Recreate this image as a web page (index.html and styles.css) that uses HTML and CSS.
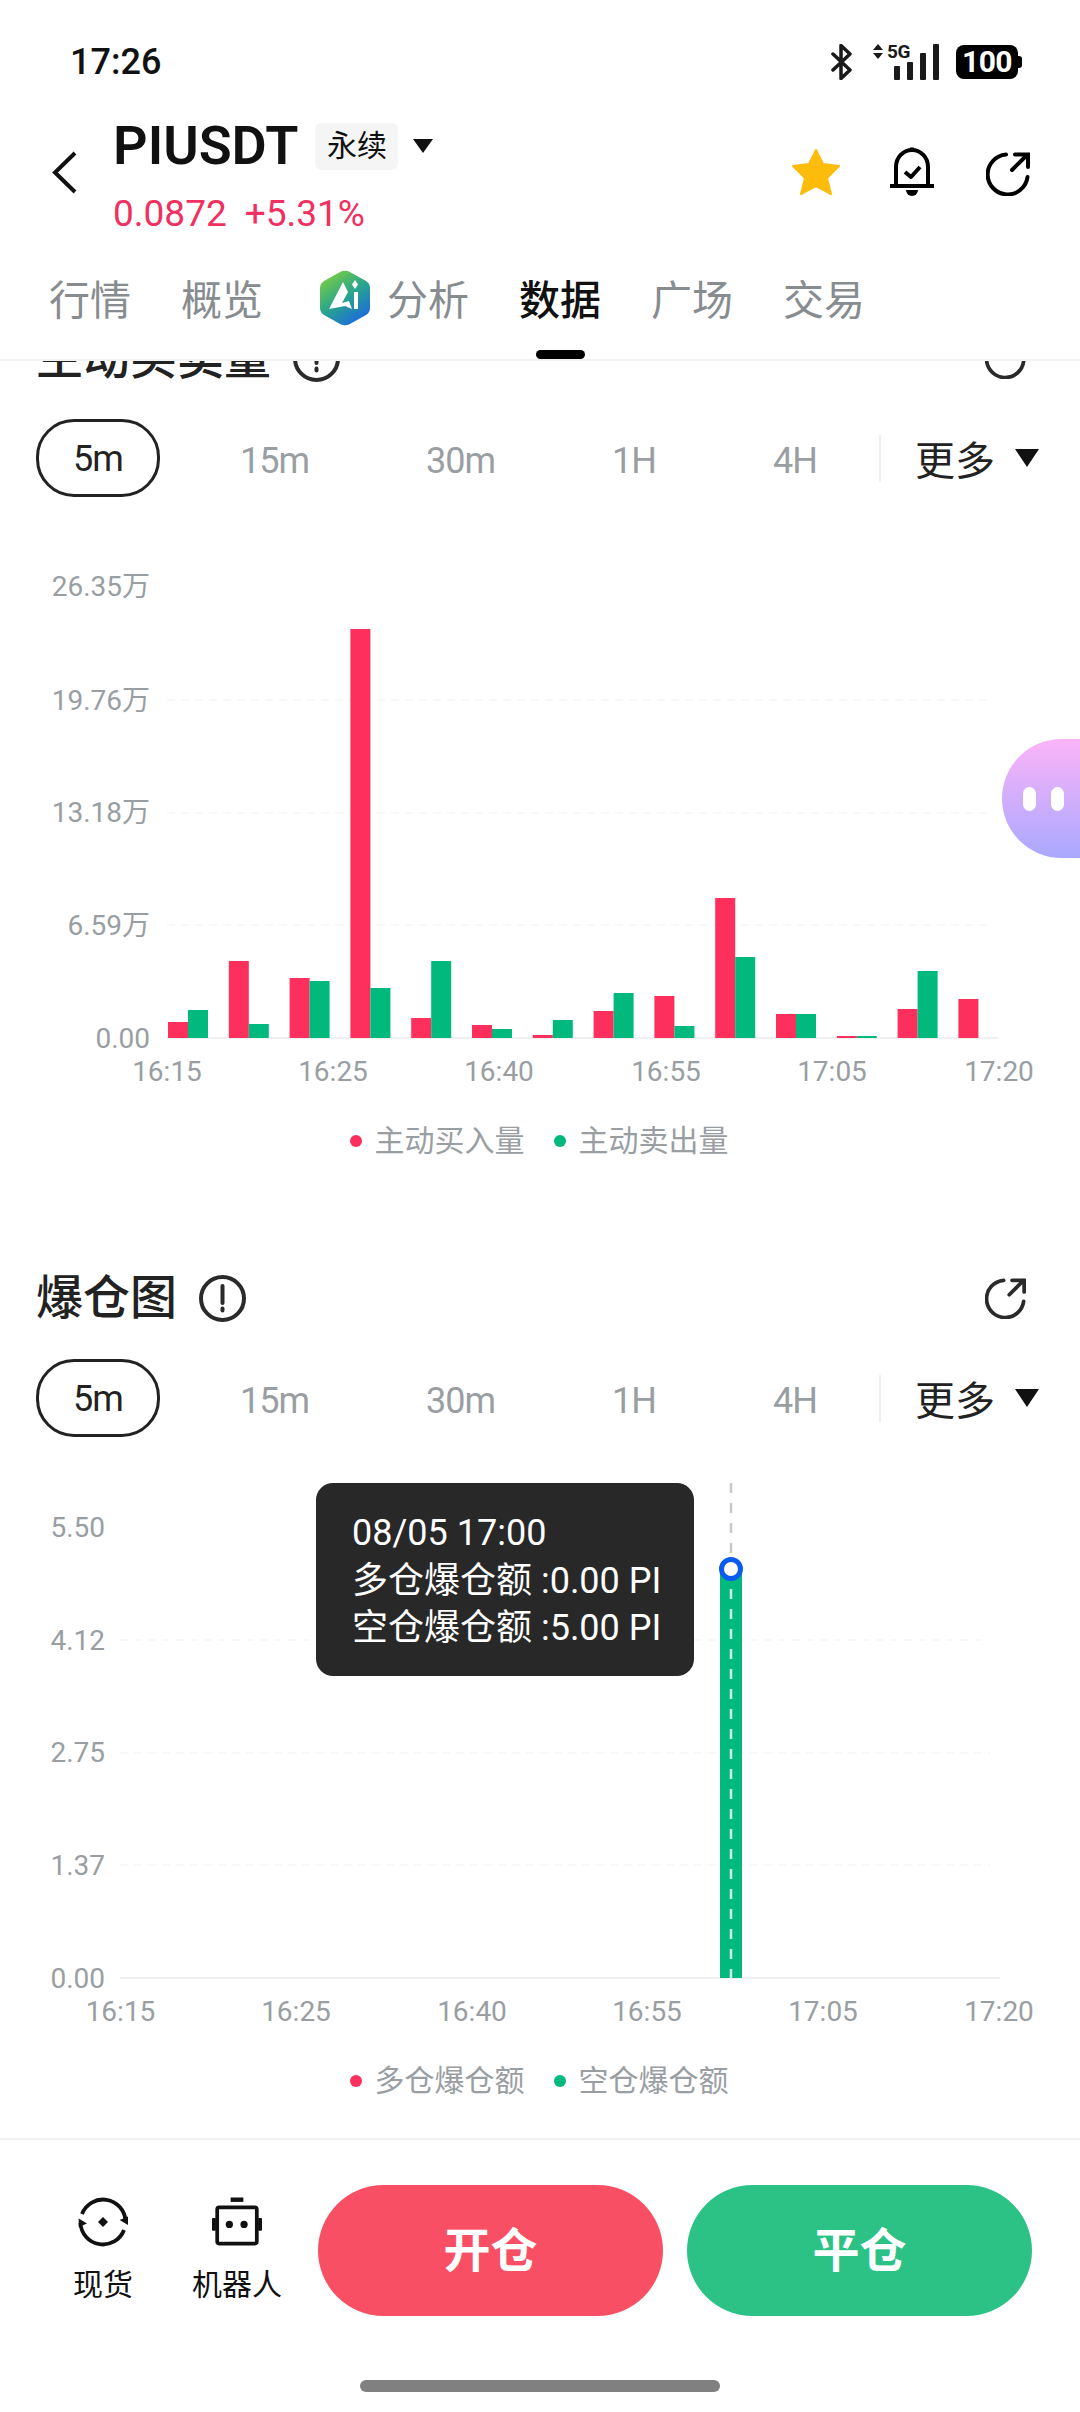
FILE: index.html
```html
<!doctype html>
<html lang="zh">
<head>
    <meta charset="utf-8">
    <title>PIUSDT 数据</title>
    <link rel="stylesheet" href="styles.css">
</head>
<body>
    <div class="page">
        <header class="top">
            <div class="status-bar">
                <span class="clock">17:26</span>
                <div class="status-icons">
                    <svg class="ic-bt" viewBox="0 0 21 36"><path d="M2 10 L19 26 L10 34.5 V1.5 L19 10 L2 26"/></svg>
                    <svg class="ic-signal" viewBox="0 0 67 36">
                        <polygon points="0,6 5,0 10,6"/>
                        <polygon points="0,9 10,9 5,15"/>
                        <text x="14" y="14" class="five-g">5G</text>
                        <rect x="21" y="22" width="6" height="14" rx="1"/>
                        <rect x="34" y="18" width="6" height="18" rx="1"/>
                        <rect x="47" y="9" width="6" height="27" rx="1"/>
                        <rect x="60" y="0" width="6" height="36" rx="1"/>
                    </svg>
                    <div class="battery">100</div>
                </div>
            </div>

            <div class="head-row">
                <svg class="ic-back" viewBox="0 0 25 43"><path d="M23 2 L3 21.5 L23 41"/></svg>
                <div class="pair">
                    <div class="pair-name">
                        <h1>PIUSDT</h1>
                        <span class="tag">永续</span>
                        <span class="tri tri-tag"></span>
                    </div>
                    <div class="pair-price">
                        <span>0.0872</span>
                        <span>+5.31%</span>
                    </div>
                </div>
                <div class="head-actions">
                    <svg class="ic-star" viewBox="0 0 50 48"><polygon points="25,2 32,16 48,18 36,30 40,46 25,38 10,46 14,30 2,18 18,16"/></svg>
                    <svg class="ic-bell" viewBox="0 0 44 50">
                        <path class="line" d="M6 39 V20 A16 17 0 0 1 38 20 V39"/>
                        <path class="line" d="M0 39 H44"/>
                        <path class="line" d="M22 0.5 V3"/>
                        <path class="line" d="M15 25 L21 30 L30 20"/>
                        <path class="solid" d="M16 43 H28 A6 6 0 0 1 16 43 Z"/>
                    </svg>
                    <svg class="ic-share" viewBox="0 0 44 44">
                        <path d="M20 2.5 A20 20 0 1 0 41.5 25"/>
                        <path d="M26 18 L41 3"/>
                        <path d="M29 2.5 H42 V15"/>
                    </svg>
                </div>
            </div>

            <nav class="tabs">
                <div class="tab">行情</div>
                <div class="tab">概览</div>
                <div class="tab tab-ai">
                    <svg class="ic-ai" viewBox="0 0 52 56">
                        <defs>
                            <linearGradient id="aiGrad" x1="0.15" y1="0" x2="0.8" y2="1">
                                <stop offset="0" stop-color="#7fd13c"/>
                                <stop offset="0.5" stop-color="#2aa58c"/>
                                <stop offset="1" stop-color="#1a64e6"/>
                            </linearGradient>
                        </defs>
                        <path fill="url(#aiGrad)" d="M22 1.5 Q26 0 30 1.5 L47 11 Q51 13.500 51 18 V38 Q51 42.500 47 45 L30 54.500 Q26 56 22 54.500 L5 45 Q1 42.500 1 38 V18 Q1 13.500 5 11 Z"/>
                        <path fill="#fff" d="M10 39 L24 12 L29 22 L23 33 L30 31 L33 39 L26 36 Z"/>
                        <path fill="#fff" d="M35 22 H39 V39 H35 Z"/>
                        <path fill="#fff" d="M36 10 L39 14.500 L36 19 L33 14.500 Z"/>
                    </svg>
                    <span>分析</span>
                </div>
                <div class="tab tab-active">数据</div>
                <div class="tab">广场</div>
                <div class="tab">交易</div>
            </nav>
        </header>

        <main class="scroll">
            <section class="section section-first">
                <div class="section-head">
                    <h2>主动买卖量</h2>
                    <svg class="ic-info" viewBox="0 0 47 47">
                        <circle cx="23.5" cy="23.500" r="21.500"/>
                        <path d="M23.500 11 V28"/>
                        <path d="M23.500 33.500 V35.500"/>
                    </svg>
                    <svg class="ic-share ic-share-sm" viewBox="0 0 44 44">
                        <path d="M20 2.5 A20 20 0 1 0 41.5 25"/>
                        <path d="M26 18 L41 3"/>
                        <path d="M29 2.5 H42 V15"/>
                    </svg>
                </div>
                <div class="periods">
                    <span class="period period-on">5m</span>
                    <span class="period">15m</span>
                    <span class="period">30m</span>
                    <span class="period">1H</span>
                    <span class="period">4H</span>
                    <div class="more"><span>更多</span><span class="tri tri-more"></span></div>
                </div>
                <div class="chart">
                    <svg class="plot" viewBox="0 0 1080 590">
                        <g class="grid">
                            <line x1="167" y1="190" x2="992" y2="190"/>
                            <line x1="167" y1="303" x2="992" y2="303"/>
                            <line x1="167" y1="415" x2="992" y2="415"/>
                        </g>
                        <line class="base" x1="167" y1="528" x2="998" y2="528"/>
                        <g class="bars-buy">
                            <rect x="168" y="512" width="20" height="16"/>
                            <rect x="228.8" y="451" width="20" height="77"/>
                            <rect x="289.6" y="468" width="20" height="60"/>
                            <rect x="350.4" y="119" width="20" height="409"/>
                            <rect x="411.2" y="508" width="20" height="20"/>
                            <rect x="472" y="515" width="20" height="13"/>
                            <rect x="532.8" y="525" width="20" height="3"/>
                            <rect x="593.6" y="501" width="20" height="27"/>
                            <rect x="654.4" y="486" width="20" height="42"/>
                            <rect x="715.2" y="388" width="20" height="140"/>
                            <rect x="776" y="504" width="20" height="24"/>
                            <rect x="836.8" y="526" width="20" height="2"/>
                            <rect x="897.6" y="499" width="20" height="29"/>
                            <rect x="958.4" y="489" width="20" height="39"/>
                        </g>
                        <g class="bars-sell">
                            <rect x="188" y="500" width="20" height="28"/>
                            <rect x="248.8" y="514" width="20" height="14"/>
                            <rect x="309.6" y="471" width="20" height="57"/>
                            <rect x="370.4" y="478" width="20" height="50"/>
                            <rect x="431.2" y="451" width="20" height="77"/>
                            <rect x="492" y="519" width="20" height="9"/>
                            <rect x="552.8" y="510" width="20" height="18"/>
                            <rect x="613.6" y="483" width="20" height="45"/>
                            <rect x="674.4" y="516" width="20" height="12"/>
                            <rect x="735.2" y="447" width="20" height="81"/>
                            <rect x="796" y="504" width="20" height="24"/>
                            <rect x="856.8" y="526" width="20" height="2"/>
                            <rect x="917.6" y="461" width="20" height="67"/>
                        </g>
                        <g class="y-labels">
                            <text x="150" y="86">26.35万</text>
                            <text x="150" y="200">19.76万</text>
                            <text x="150" y="312">13.18万</text>
                            <text x="150" y="425">6.59万</text>
                            <text x="150" y="538">0.00</text>
                        </g>
                        <g class="x-labels">
                            <text x="167" y="571">16:15</text>
                            <text x="333" y="571">16:25</text>
                            <text x="499" y="571">16:40</text>
                            <text x="666" y="571">16:55</text>
                            <text x="832" y="571">17:05</text>
                            <text x="999" y="571">17:20</text>
                        </g>
                    </svg>
                </div>
                <div class="legend">
                    <div class="legend-item"><i class="dot dot-red"></i>主动买入量</div>
                    <div class="legend-item"><i class="dot dot-green"></i>主动卖出量</div>
                </div>
            </section>

            <section class="section">
                <div class="section-head">
                    <h2>爆仓图</h2>
                    <svg class="ic-info" viewBox="0 0 47 47">
                        <circle cx="23.5" cy="23.500" r="21.500"/>
                        <path d="M23.500 11 V28"/>
                        <path d="M23.500 33.500 V35.500"/>
                    </svg>
                    <svg class="ic-share ic-share-sm" viewBox="0 0 44 44">
                        <path d="M20 2.5 A20 20 0 1 0 41.5 25"/>
                        <path d="M26 18 L41 3"/>
                        <path d="M29 2.5 H42 V15"/>
                    </svg>
                </div>
                <div class="periods">
                    <span class="period period-on">5m</span>
                    <span class="period">15m</span>
                    <span class="period">30m</span>
                    <span class="period">1H</span>
                    <span class="period">4H</span>
                    <div class="more"><span>更多</span><span class="tri tri-more"></span></div>
                </div>
                <div class="chart">
                    <svg class="plot" viewBox="0 0 1080 590">
                        <g class="grid">
                            <line x1="120" y1="190" x2="990" y2="190"/>
                            <line x1="120" y1="303" x2="990" y2="303"/>
                            <line x1="120" y1="415" x2="990" y2="415"/>
                        </g>
                        <line class="base" x1="120" y1="528" x2="1000" y2="528"/>
                        <rect class="liq-bar" x="720" y="119" width="22" height="409"/>
                        <line class="cursor-top" x1="731" y1="33" x2="731" y2="119"/>
                        <line class="cursor-low" x1="731" y1="119" x2="731" y2="528"/>
                        <circle class="marker" cx="731" cy="119" r="9.500"/>
                        <g class="y-labels">
                            <text x="105" y="87">5.50</text>
                            <text x="105" y="200">4.12</text>
                            <text x="105" y="312">2.75</text>
                            <text x="105" y="425">1.37</text>
                            <text x="105" y="538">0.00</text>
                        </g>
                        <g class="x-labels">
                            <text x="120.500" y="571">16:15</text>
                            <text x="296" y="571">16:25</text>
                            <text x="472" y="571">16:40</text>
                            <text x="647" y="571">16:55</text>
                            <text x="823" y="571">17:05</text>
                            <text x="999" y="571">17:20</text>
                        </g>
                    </svg>
                    <div class="tooltip">
                        <div>08/05 17:00</div>
                        <div>多仓爆仓额 :0.00 PI</div>
                        <div>空仓爆仓额 :5.00 PI</div>
                    </div>
                </div>
                <div class="legend">
                    <div class="legend-item"><i class="dot dot-red"></i>多仓爆仓额</div>
                    <div class="legend-item"><i class="dot dot-green"></i>空仓爆仓额</div>
                </div>
            </section>
        </main>

        <footer class="bottom">
            <div class="actions">
                <div class="tool">
                    <svg class="tool-icon" viewBox="0 0 50 50">
                        <path class="line" d="M4 17 A22.500 22.500 0 0 1 47.500 24"/>
                        <path class="line" d="M2.500 26 A22.500 22.500 0 0 0 46 33"/>
                        <polygon points="41.700,23 50,19.500 50,28"/>
                        <polygon points="0.700,21.500 9,26.500 0.700,30"/>
                        <polygon points="25,20 30,25 25,30 20,25"/>
                    </svg>
                    <span>现货</span>
                </div>
                <div class="tool">
                    <svg class="tool-icon" viewBox="0 0 51 50">
                        <rect x="19" y="0" width="13" height="4.500"/>
                        <rect class="line" x="5.300" y="10" width="40.400" height="37" rx="2"/>
                        <rect x="0" y="21" width="4" height="13" rx="1"/>
                        <rect x="47" y="21" width="4" height="13" rx="1"/>
                        <circle cx="17.700" cy="27.500" r="3.700"/>
                        <circle cx="32.700" cy="27.500" r="3.700"/>
                    </svg>
                    <span>机器人</span>
                </div>
                <button class="btn btn-open">开仓</button>
                <button class="btn btn-close">平仓</button>
            </div>
            <div class="home-bar"></div>
        </footer>

        <div class="float-bot">
            <span></span>
            <span></span>
        </div>
    </div>
</body>
</html>
```

FILE: styles.css
```css
* {
    box-sizing: border-box;
}
body {
    margin: 0;
    background-color: #fff;
    font-family: Roboto, "Noto Sans CJK SC", sans-serif;
    color: #111;
}
.page {
    position: relative;
    display: flex;
    flex-direction: column;
    width: 1080px;
    height: 2412px;
    overflow: hidden;
}

/* top area */
.top {
    position: relative;
    z-index: 1;
    height: 361px;
    flex: none;
    background-color: #fff;
    border-bottom: 2px solid #f3f3f3;
}
.status-bar {
    display: flex;
    justify-content: space-between;
    align-items: center;
    height: 123px;
    padding: 0 62px 0 70px;
}
.clock {
    font-size: 36px;
    font-weight: 500;
}
.status-icons {
    display: flex;
    align-items: center;
}
.ic-bt {
    width: 21px;
    height: 36px;
    margin-right: 21px;
    fill: none;
    stroke: #1a1a1a;
    stroke-width: 3.5;
    stroke-linejoin: round;
    stroke-linecap: round;
}
.ic-signal {
    width: 67px;
    height: 36px;
    margin-right: 16px;
    fill: #1a1a1a;
    overflow: visible;
}
.five-g {
    font-size: 19px;
    font-weight: 700;
    letter-spacing: -0.5px;
}
.battery {
    position: relative;
    width: 62px;
    height: 34px;
    border-radius: 8px;
    background-color: #000;
    color: #fff;
    font-size: 30px;
    font-weight: 700;
    letter-spacing: -0.5px;
    line-height: 34px;
    text-align: center;
}
.battery::after {
    content: "";
    position: absolute;
    right: -4px;
    top: 11px;
    width: 4px;
    height: 12px;
    border-radius: 0 3px 3px 0;
    background-color: #000;
}

.head-row {
    display: flex;
    height: 111px;
    padding-left: 52px;
}
.ic-back {
    width: 25px;
    height: 43px;
    margin-top: 28px;
    margin-right: 36px;
    fill: none;
    stroke: #111;
    stroke-width: 4;
}
.pair-name {
    display: flex;
    align-items: center;
    height: 46px;
}
h1 {
    margin: 0;
    font-size: 54px;
    font-weight: 600;
    line-height: 46px;
}
.tag {
    width: 83px;
    height: 47px;
    margin-left: 17px;
    border-radius: 6px;
    background-color: #f5f5f5;
    font-size: 30px;
    line-height: 46px;
    text-align: center;
}
.tri {
    display: block;
    width: 0;
    height: 0;
    border-left: 10px solid transparent;
    border-right: 10px solid transparent;
    border-top: 14px solid #111;
}
.tri-tag {
    margin-left: 15px;
}
.pair-price {
    display: flex;
    gap: 18px;
    margin-top: 25px;
    color: #ef3060;
    font-size: 37px;
    line-height: 40px;
}
.head-actions {
    display: flex;
    align-items: flex-start;
    margin-left: auto;
    padding-right: 50px;
}
.ic-star {
    width: 50px;
    height: 48px;
    margin-top: 25px;
    fill: #fdbb0c;
    stroke: #fdbb0c;
    stroke-width: 2;
    stroke-linejoin: round;
}
.ic-bell {
    width: 44px;
    height: 50px;
    margin-top: 24px;
    margin-left: 49px;
}
.ic-bell .line {
    fill: none;
    stroke: #000;
    stroke-width: 4;
    stroke-linejoin: round;
}
.ic-bell .solid {
    fill: #000;
}
.ic-share {
    width: 44px;
    height: 44px;
    margin-top: 29px;
    margin-left: 52px;
    fill: none;
    stroke: #000;
    stroke-width: 4;
    stroke-linecap: round;
}

.tabs {
    display: flex;
    gap: 50px;
    margin-top: 37px;
    padding-left: 49px;
}
.tab {
    color: #878c90;
    font-size: 41px;
    line-height: 60px;
}
.tab-ai {
    display: flex;
    align-items: center;
    gap: 16px;
    height: 60px;
    padding-left: 6px;
}
.ic-ai {
    width: 52px;
    height: 56px;
    margin-top: -6px;
}
.tab-active {
    color: #111;
    font-weight: 500;
}
.tab-active::after {
    content: "";
    display: block;
    width: 49px;
    height: 9px;
    margin: 19px auto 0;
    border-radius: 5px;
    background-color: #000;
}

/* scrolled content */
.scroll {
    flex: 1;
    overflow: hidden;
}
.section {
    padding-bottom: 92px;
}
.section-first {
    margin-top: -49px;
    padding-bottom: 91px;
}
.section-head {
    display: flex;
    align-items: center;
    height: 92px;
    padding: 0 54px 0 36px;
}
h2 {
    margin: 0;
    color: #222;
    font-size: 47px;
    font-weight: 500;
    line-height: 60px;
}
.ic-info {
    width: 47px;
    height: 47px;
    margin-left: 22px;
    fill: none;
    stroke: #2a2a2a;
    stroke-width: 4;
    stroke-linecap: round;
}
.ic-share-sm {
    width: 41px;
    height: 41px;
    margin-top: 0;
    margin-left: auto;
    stroke: #2a2a2a;
}

.periods {
    display: flex;
    align-items: center;
    height: 78px;
    margin-top: 15px;
    padding: 0 41px 0 36px;
}
.period {
    margin-left: 117px;
    padding-top: 5px;
    color: #999ea3;
    font-size: 36px;
    letter-spacing: -1px;
}
.period:nth-child(2) {
    margin-left: 80px;
}
.period-on {
    width: 124px;
    height: 78px;
    margin-left: 0;
    padding-top: 0;
    border: 3px solid #222;
    border-radius: 38px;
    color: #222;
    line-height: 74px;
    text-align: center;
}
.more {
    display: flex;
    align-items: center;
    gap: 20px;
    height: 47px;
    margin-left: auto;
    padding-left: 34px;
    border-left: 2px solid #f0f0f0;
    color: #222;
    font-size: 40px;
}
.tri-more {
    border-left-width: 12px;
    border-right-width: 12px;
    border-top-width: 18px;
}

.chart {
    position: relative;
    height: 590px;
    margin-top: 13px;
}
.plot {
    display: block;
    width: 1080px;
    height: 590px;
}
.grid line {
    stroke: #f8f8f8;
    stroke-width: 2;
    stroke-dasharray: 8 6;
}
.base {
    stroke: #f0f0f0;
    stroke-width: 2;
}
.bars-buy {
    fill: #fd2f5d;
}
.bars-sell {
    fill: #02b97d;
}
.y-labels text {
    fill: #999ea3;
    font-size: 28px;
    text-anchor: end;
}
.x-labels text {
    fill: #999ea3;
    font-size: 28px;
    text-anchor: middle;
}
.liq-bar {
    fill: #02b97d;
}
.cursor-top {
    stroke: #c8c8c8;
    stroke-width: 2.5;
    stroke-dasharray: 10 10;
}
.cursor-low {
    stroke: #cfeee2;
    stroke-width: 2.5;
    stroke-dasharray: 10 10;
}
.marker {
    fill: #fff;
    stroke: #0a5cf0;
    stroke-width: 5;
}
.tooltip {
    position: absolute;
    left: 316px;
    top: 33px;
    width: 378px;
    height: 193px;
    padding: 27px 0 0 36px;
    border-radius: 17px;
    background-color: #282828;
    color: #fff;
    font-size: 36px;
    line-height: 47.5px;
    white-space: nowrap;
}

.legend {
    display: flex;
    justify-content: center;
    gap: 29px;
    height: 40px;
    margin-top: 21px;
    padding-right: 2px;
}
.legend-item {
    display: flex;
    align-items: center;
    gap: 13px;
    color: #999ea3;
    font-size: 30px;
    line-height: 40px;
}
.dot {
    width: 12px;
    height: 12px;
    border-radius: 50%;
}
.dot-red {
    background-color: #fd2f5d;
}
.dot-green {
    background-color: #02b97d;
}

/* bottom bar */
.bottom {
    flex: none;
    height: 274px;
    border-top: 2px solid #f2f2f2;
}
.actions {
    display: flex;
    height: 131px;
    margin-top: 45px;
    padding-left: 46px;
}
.tool {
    display: flex;
    flex-direction: column;
    align-items: center;
    width: 114px;
    margin-right: 20px;
    padding-top: 12px;
    font-size: 30px;
    line-height: 40px;
}
.tool span {
    margin-top: 18px;
}
.tool-icon {
    width: 50px;
    height: 50px;
    fill: #111;
}
.tool-icon .line {
    fill: none;
    stroke: #111;
    stroke-width: 3.8;
}
.btn {
    width: 345px;
    height: 131px;
    padding: 0 0 8px;
    border: none;
    border-radius: 66px;
    color: #fff;
    font-family: inherit;
    font-size: 47px;
    font-weight: 700;
}
.btn-open {
    margin-left: 4px;
    background-color: #f94f64;
}
.btn-close {
    margin-left: 24px;
    background-color: #2cc286;
}
.home-bar {
    width: 360px;
    height: 12px;
    margin: 64px auto 0;
    border-radius: 6px;
    background-color: #808080;
}

/* floating helper, lies over the chart */
.float-bot {
    position: absolute;
    right: 0;
    top: 739px;
    z-index: 2;
    display: flex;
    align-items: center;
    gap: 15px;
    width: 78px;
    height: 119px;
    padding-left: 21px;
    border-radius: 60px 0 0 60px;
    background: linear-gradient(#fbb4f8, #a9a8ff);
}
.float-bot span {
    flex: none;
    width: 13px;
    height: 24px;
    border-radius: 7px;
    background-color: #fff;
}
```
